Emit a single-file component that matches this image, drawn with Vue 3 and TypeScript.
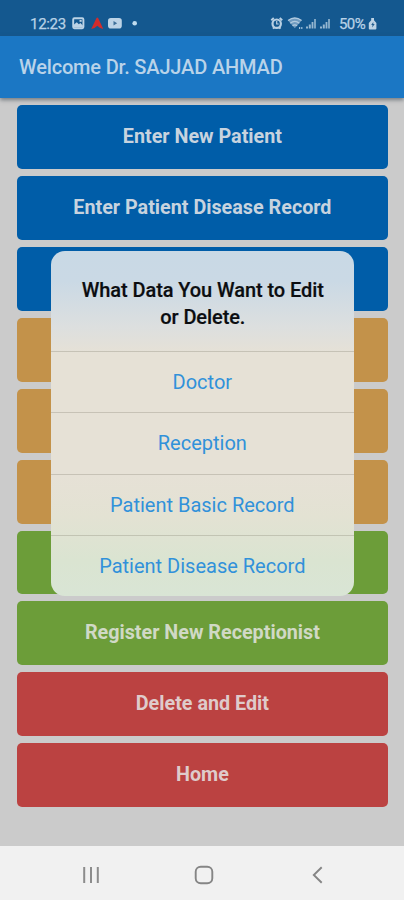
<script setup lang="ts">
interface MenuButton {
  label: string
  tone: 'blue' | 'amber' | 'green' | 'red'
}

const buttons: MenuButton[] = [
  { label: 'Enter New Patient', tone: 'blue' },
  { label: 'Enter Patient Disease Record', tone: 'blue' },
  { label: '', tone: 'blue' },
  { label: '', tone: 'amber' },
  { label: '', tone: 'amber' },
  { label: '', tone: 'amber' },
  { label: '', tone: 'green' },
  { label: 'Register New Receptionist', tone: 'green' },
  { label: 'Delete and Edit', tone: 'red' },
  { label: 'Home', tone: 'red' },
]

const options: string[] = ['Doctor', 'Reception', 'Patient Basic Record', 'Patient Disease Record']
</script>

<template>
  <div class="screen">
    <header class="status">
      <span class="clock">12:23</span>
      <svg class="notifications" width="70" height="16" viewBox="0 0 70 16">
        <rect x="2.200" y="2.200" width="10.200" height="10" rx="1.200" fill="none" stroke="#bcd3e6" stroke-width="1.900" />
        <path d="M3 11.500V8.500l2.800-2.200 2 2 1.500-1.300 2.600 2.500v2z" fill="#bcd3e6" />
        <path d="M8.500 4h2.200v1.800H8.500z" fill="#bcd3e6" />
        <path d="M20.200 12.900 25.500 2q.8-.8 1.600 0L32.300 12.900q-3.600-.5-6-3.200-2.200 2.700-6.100 3.200z" fill="#d22c2b" />
        <rect x="37" y="2" width="13.800" height="10.500" rx="2.800" fill="#bcd3e6" />
        <path d="M42.500 5v4.500l3.700-2.250z" fill="#3f7099" />
        <circle cx="63.700" cy="7.300" r="2.300" fill="#c0dcef" />
      </svg>
      <svg class="signals" width="62" height="16" viewBox="0 0 62 16">
        <g fill="none" stroke="#b9d0e3">
          <circle cx="6.700" cy="7.700" r="4.200" stroke-width="2.200" />
          <path d="M1.300 4.200 3.800 2M9.700 2l2.500 2.200M3 12.700l1.200-1.400M10.500 12.700l-1.200-1.400" stroke-width="2" />
          <path d="M6.700 5v3h2" stroke-width="1.200" />
        </g>
        <path d="M18 4.500q6.800-5 13.600 0l-6.800 7.800z" fill="#6f9bc0" />
        <path d="M18 4.500q6.800-5 13.600 0M20.200 7.200q4.600-3.500 9.200 0M22.500 9.800q2.300-1.700 4.600 0" fill="none" stroke="#b1cadf" stroke-width="1.300" />
        <path d="M29 12h1.200M31.200 12h1.200" stroke="#a4c3db" stroke-width="2" />
        <g fill="#97b8d2">
          <rect x="36" y="10.500" width="2" height="2" />
          <rect x="38.800" y="8.500" width="2" height="4" />
          <rect x="41.600" y="6" width="1.800" height="6.500" />
          <rect x="44.200" y="3" width="1.600" height="9.500" />
          <rect x="50" y="10.500" width="2" height="2" />
          <rect x="52.800" y="8.500" width="2" height="4" />
          <rect x="55.600" y="6" width="1.800" height="6.500" />
          <rect x="58.200" y="3" width="1.600" height="9.500" />
        </g>
      </svg>
      <span class="percent">50%</span>
      <svg class="battery" width="10" height="14" viewBox="0 0 10 14">
        <path d="M3.200 1h2.800v2.200l2.400 2.800V11.500q0 1-1 1H1.800q-1 0-1-1V6l2.400-2.800z" fill="#bdd3e5" />
        <path d="M5.300 5 3.200 8h1.300L4.200 10.500 6.700 7H5.300z" fill="#215d8f" />
      </svg>
    </header>

    <div class="appbar"><h1>Welcome Dr. SAJJAD AHMAD</h1></div>

    <main class="menu">
      <button v-for="(button, i) in buttons" :key="i" class="item" :class="button.tone">{{ button.label }}</button>
    </main>

    <nav class="nav">
      <svg width="20" height="20" viewBox="0 0 20 20"><path d="M3.200 2v16M10 2v16M16.800 2v16" stroke="#8c8c8c" stroke-width="2" /></svg>
      <svg width="20" height="20" viewBox="0 0 20 20"><rect x="1.700" y="1.700" width="16.600" height="16.600" rx="5" fill="none" stroke="#858585" stroke-width="1.900" /></svg>
      <svg width="20" height="20" viewBox="0 0 20 20"><path d="M14.700 2.300 6.800 10l7.900 7.700" fill="none" stroke="#858585" stroke-width="1.900" /></svg>
    </nav>

    <section class="dialog" role="dialog">
      <h2>What Data You Want to Edit<br />or Delete.</h2>
      <button v-for="option in options" :key="option" class="option">{{ option }}</button>
    </section>
  </div>
</template>

<style>
body {
  background: #cbcbcb;
}
</style>

<style scoped>
.screen {
  position: relative;
  display: flex;
  flex-direction: column;
  width: 404px;
  height: 900px;
  overflow: hidden;
  background: #cbcbcb;
  font-family: Roboto, 'Liberation Sans', sans-serif;
}
button {
  border: 0;
  margin: 0;
  padding: 0;
  font-family: inherit;
}
h1,
h2 {
  margin: 0;
}
svg {
  display: block;
  flex: none;
}
.status {
  display: flex;
  align-items: center;
  box-sizing: border-box;
  height: 36px;
  padding: 11px 26px 0 30px;
  background: #14588f;
  color: #b9d2e6;
  font-size: 15px;
  line-height: 16px;
}
.clock {
  width: 41px;
  letter-spacing: -0.3px;
  -webkit-text-stroke: 0.25px currentColor;
}
.signals {
  margin-left: auto;
}
.percent {
  width: 28px;
  margin-left: 7px;
  letter-spacing: -0.6px;
  -webkit-text-stroke: 0.25px currentColor;
}
.battery {
  margin-left: 1px;
}
.appbar {
  position: relative;
  display: flex;
  align-items: center;
  box-sizing: border-box;
  height: 62px;
  padding: 0 19px 1px;
  background: #1b77c4;
  box-shadow: 0 2px 4px rgba(60, 70, 80, 0.6);
}
.appbar h1 {
  color: #b9d3e9;
  font-size: 20px;
  font-weight: 500;
  letter-spacing: -0.16px;
  line-height: 24px;
  white-space: nowrap;
}
.menu {
  display: flex;
  flex: 1;
  flex-direction: column;
  gap: 7px;
  padding: 7.300px 16.500px 0 17.300px;
}
.item {
  flex: none;
  height: 63.890px;
  padding: 0 0 1px;
  border-radius: 5px;
  color: #c7d3df;
  font-size: 19.750px;
  font-weight: 700;
}
.blue {
  background: #005da8;
}
.amber {
  background: #c3924a;
}
.green {
  background: #6c9d39;
  color: #d0d9c5;
}
.red {
  background: #bb4241;
  color: #dfcbcb;
}
.nav {
  display: flex;
  align-items: center;
  justify-content: space-between;
  box-sizing: border-box;
  height: 54px;
  padding: 4px 77px 0 81px;
  background: #f1f1f1;
}
.dialog {
  position: absolute;
  top: 250.500px;
  left: 51.300px;
  display: flex;
  flex-direction: column;
  width: 303px;
  height: 345.500px;
  overflow: hidden;
  border-radius: 14px;
  background: linear-gradient(#c9d9e5 0, #cad9e5 30px, #dcdfdf 75px, #e6e1d6 103px, #e6e1d6 225px, #e3e2d3 265px, #dae4d1 310px, #d9e5d5 100%);
}
.dialog h2 {
  box-sizing: border-box;
  height: 100.500px;
  padding-top: 26px;
  color: #0b0d10;
  font-size: 20px;
  font-weight: 500;
  letter-spacing: -0.08px;
  line-height: 27px;
  text-align: center;
  white-space: nowrap;
  -webkit-text-stroke: 0.2px currentColor;
}
.option {
  box-sizing: border-box;
  height: 61.250px;
  padding-right: 1px;
  border-top: 1.500px solid rgba(90, 85, 70, 0.22);
  background: none;
  color: #3191da;
  font-size: 20px;
}
</style>
